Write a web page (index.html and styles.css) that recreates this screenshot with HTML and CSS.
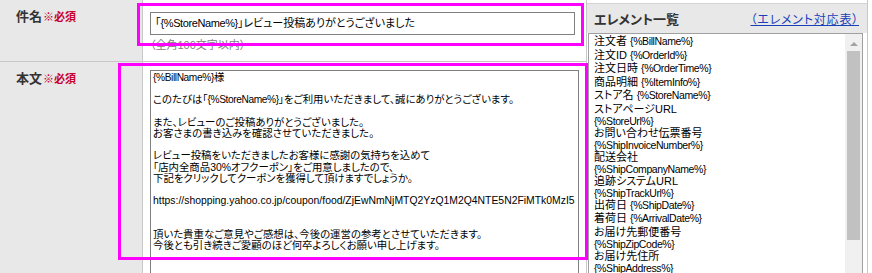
FILE: index.html
```html
<!DOCTYPE html>
<html lang="ja">
<head>
<meta charset="utf-8">
<title>メールテンプレート編集</title>
<link rel="stylesheet" href="styles.css">
</head>
<body>
<div class="page">
  <div class="form">
    <div class="row row-subject">
      <div class="label">件名<span class="req">※必須</span></div>
      <div class="field">
        <div class="input">「<span class="tok">{%StoreName%}</span>」レビュー投稿ありがとうございました</div>
        <div class="note">（全角100文字以内）</div>
      </div>
    </div>
    <div class="row row-body">
      <div class="label">本文<span class="req">※必須</span></div>
      <div class="field">
<div class="textarea"><span class="tok">{%BillName%}</span>様

このたびは「<span class="tok">{%StoreName%}</span>」をご利用いただきまして、誠にありがとうございます。

また、レビューのご投稿ありがとうございました。
お客さまの書き込みを確認させていただきました。

レビュー投稿をいただきましたお客様に感謝の気持ちを込めて
「店内全商品30%オフクーポン」をご用意しましたので、
下記をクリックしてクーポンを獲得して頂けますでしょうか。

<span class="url">https://shopping.yahoo.co.jp/coupon/food/ZjEwNmNjMTQ2YzQ1M2Q4NTE5N2FiMTk0MzI5</span>


頂いた貴重なご意見やご感想は、今後の運営の参考とさせていただきます。
今後とも引き続きご愛顧のほど何卒よろしくお願い申し上げます。</div>
      </div>
    </div>
  </div>
  <aside class="elements">
    <div class="el-head">
      <span class="el-title">エレメント一覧</span>
      <a class="el-link" href="#">（エレメント対応表）</a>
    </div>
    <div class="el-box">
      <ul class="el-list">
        <li>注文者 <span class="tok">{%BillName%}</span></li>
        <li>注文ID <span class="tok">{%OrderId%}</span></li>
        <li>注文日時 <span class="tok">{%OrderTime%}</span></li>
        <li>商品明細 <span class="tok">{%ItemInfo%}</span></li>
        <li>ストア名 <span class="tok">{%StoreName%}</span></li>
        <li>ストアページURL</li>
        <li class="code"><span class="tok">{%StoreUrl%}</span></li>
        <li>お問い合わせ伝票番号</li>
        <li class="code"><span class="tok">{%ShipInvoiceNumber%}</span></li>
        <li>配送会社</li>
        <li class="code"><span class="tok">{%ShipCompanyName%}</span></li>
        <li>追跡システムURL</li>
        <li class="code"><span class="tok">{%ShipTrackUrl%}</span></li>
        <li>出荷日 <span class="tok">{%ShipDate%}</span></li>
        <li>着荷日 <span class="tok">{%ArrivalDate%}</span></li>
        <li>お届け先郵便番号</li>
        <li class="code"><span class="tok">{%ShipZipCode%}</span></li>
        <li>お届け先住所</li>
        <li class="code"><span class="tok">{%ShipAddress%}</span></li>
        <li>お届け先氏名 <span class="tok">{%ShipName%}</span></li>
      </ul>
      <div class="scrollbar">
        <span class="sb-arrow"></span>
        <span class="sb-thumb"></span>
      </div>
    </div>
  </aside>
  <div class="mark mark-subject"></div>
  <div class="mark mark-body"></div>
</div>
</body>
</html>
```
FILE: styles.css
```css
* { box-sizing: border-box; margin: 0; padding: 0; }
html, body { width: 872px; height: 273px; overflow: hidden; background: #fff; }
body {
  font-family: "Liberation Sans", "Noto Sans CJK JP", sans-serif;
  font-feature-settings: "palt";
  color: #000;
}
.page { position: relative; display: flex; height: 273px; overflow: hidden; }

/* left form table */
.form { width: 586px; height: 273px; display: flex; flex-direction: column; overflow: hidden; }
.row { display: flex; }
.row-subject { flex: 0 0 62px; border-bottom: 1px solid #c8c8c8; }
.row-body { flex: 1 1 auto; min-height: 0; overflow: hidden; }
.label {
  width: 143px;
  flex: 0 0 143px;
  background: #e8e8e8;
  border-right: 1px solid #c8c8c8;
  padding: 9px 0 0 16px;
  font-size: 13px;
  font-weight: bold;
  color: #333;
  line-height: 16px;
}
.req { color: #c8002a; font-size: 11px; margin-left: 1px; }
.field { flex: 1; padding-left: 7px; }
.row-subject .field { padding-top: 12px; }
.input {
  width: 425px;
  height: 23px;
  border: 1px solid #7f7f7f;
  font-size: 11px;
  line-height: 21px;
  padding-left: 4px;
  white-space: nowrap;
}
.input .tok { font-size: 11px; }
.note { font-size: 11px; color: #808080; margin-top: 3px; line-height: 14px; }
.row-body .field { padding-top: 8px; }
.textarea {
  width: 429px;
  height: 230px;
  border: 1px solid #7f7f7f;
  border-bottom: none;
  padding: 1px 2px 0;
  font-size: 10.4px;
  line-height: 11.2px;
  white-space: pre;
  overflow: hidden;
}
.tok {
  font-family: "Liberation Sans", sans-serif;
  font-size: 10.5px;
  letter-spacing: -0.4px;
}
.textarea .tok { font-size: 10.2px; }
.url { font-size: 10.4px; }

/* element list */
.elements {
  width: 282px;
  border-left: 1px solid #c8c8c8;
  border-right: 1px solid #c8c8c8;
  padding-top: 3px;
  display: flex;
  flex-direction: column;
}
.el-head {
  flex: 0 0 30px;
  background: #e8e8e8;
  border-top: 1px solid #d4d4d4;
  display: flex;
  align-items: center;
  justify-content: space-between;
  padding: 0 8px 0 7px;
}
.el-title { font-size: 13px; font-weight: bold; color: #333; }
.el-link { font-size: 12px; color: #1a3fb8; text-decoration: underline; letter-spacing: 0.8px; }
.el-box {
  flex: 1 1 auto;
  min-height: 0;
  margin: 0 4px 0 1px;
  border: 1px solid #a0a0a0;
  border-bottom: none;
  display: flex;
  overflow: hidden;
}
.el-list {
  flex: 1;
  list-style: none;
  padding: 1px 0 0 5px;
  font-size: 11px;
  line-height: 13.5px;
  white-space: nowrap;
}
.el-list .code { line-height: 10.5px; }
.scrollbar {
  width: 17px;
  background: #f0f0f0;
  display: flex;
  flex-direction: column;
  align-items: center;
}
.sb-arrow {
  margin-top: 8px;
  width: 0;
  height: 0;
  border-left: 4px solid transparent;
  border-right: 4px solid transparent;
  border-bottom: 4px solid #a3a3a3;
}
.sb-thumb {
  margin-top: 5px;
  width: 13px;
  height: 189px;
  background: #c1c1c1;
}

/* annotation highlight boxes */
.mark { position: absolute; border: 3px solid #ff00ff; pointer-events: none; }
.mark-subject { left: 137px; top: 3px; width: 447px; height: 43px; }
.mark-body { left: 118px; top: 63px; width: 470px; height: 197px; }
```
